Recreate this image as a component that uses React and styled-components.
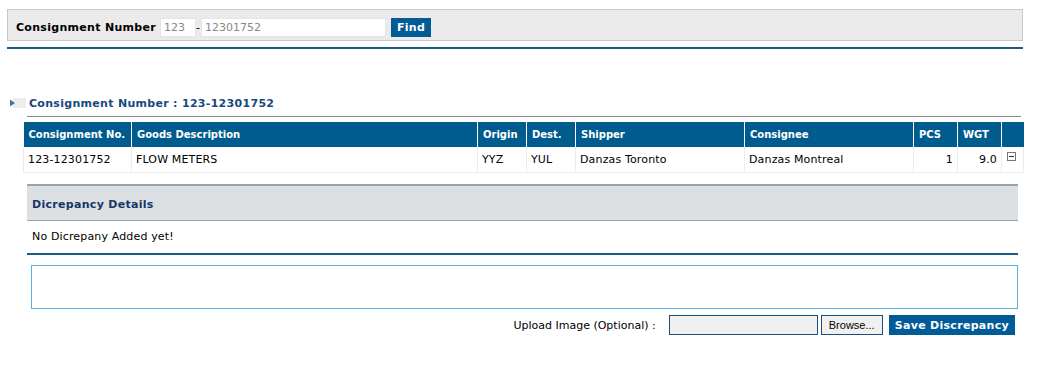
import React from 'react'
import styled, { createGlobalStyle } from 'styled-components'

const Global = createGlobalStyle`
  body {
    margin: 0;
    background: #fff;
    font-family: "DejaVu Sans", Verdana, sans-serif;
    font-size: 11px;
    color: #000;
  }
`

const Page = styled.div`
  width: 1016px;
  padding: 9px 0 0 7px;
`

const SearchBar = styled.div`
  display: flex;
  align-items: center;
  box-sizing: border-box;
  height: 32px;
  padding: 4px 8px 0;
  background: #ebebeb;
  border: 1px solid #c8c8c8;
`

const SearchLabel = styled.span`
  font-weight: bold;
  font-size: 11px;
  letter-spacing: 0.3px;
  margin-right: 4px;
`

const TextInput = styled.input`
  box-sizing: border-box;
  height: 19px;
  width: ${p => p.$w}px;
  padding: 0 3px;
  border: 1px solid #e4e4e4;
  background: #fff;
  font: 11px "DejaVu Sans", Verdana, sans-serif;
  color: #888;
  outline: none;
`

const Dash = styled.span`
  margin: 0 1px 0 0;
`

const BlueButton = styled.button`
  height: ${p => p.$h || 19}px;
  padding: 0 ${p => p.$px || 6}px;
  margin-left: ${p => p.$ml || 0}px;
  border: none;
  background: #005b96;
  color: #fff;
  font: bold 11px "DejaVu Sans", Verdana, sans-serif;
  letter-spacing: 0.3px;
  cursor: pointer;
`

const Rule = styled.div`
  height: 2px;
  background: ${p => p.$color || '#1c5b86'};
  margin: ${p => p.$m || '0'};
`

const Section = styled.div`
  margin-top: 47px;
`

const SectionHead = styled.div`
  display: flex;
  align-items: center;
  gap: 3px;
  padding-left: 2px;
  height: 14px;
`

const SectionTitle = styled.span`
  font-weight: bold;
  font-size: 11px;
  letter-spacing: 0.3px;
  color: #174a7c;
`

const TitleRule = styled.div`
  height: 1px;
  background: #8c8c8c;
  margin: 6px 2px 5px 20px;
`

const Grid = styled.table`
  border-collapse: collapse;
  margin-left: 16px;
  width: 1000px;
  table-layout: fixed;
`

const Th = styled.th`
  background: #005b8f;
  color: #fff;
  font-weight: bold;
  font-size: 10px;
  white-space: nowrap;
  overflow: hidden;
  text-align: left;
  height: 25px;
  padding: 0 5px;
  border-left: 1px solid #fff;
  &:first-child { border-left: none; }
`

const Td = styled.td`
  height: 25px;
  padding: 0 4px;
  font-size: 11px;
  letter-spacing: 0.15px;
  text-align: ${p => (p.$right ? 'right' : 'left')};
  vertical-align: ${p => (p.$top ? 'top' : 'middle')};
  border: 1px solid #ececec;
  border-top: none;
`

const Collapse = styled.span`
  display: inline-block;
  box-sizing: border-box;
  width: 9px;
  height: 9px;
  margin-top: 5px;
  margin-left: 1px;
  border: 1px solid #777;
  position: relative;
  &::after {
    content: '';
    position: absolute;
    left: 1px;
    right: 1px;
    top: 3px;
    height: 1px;
    background: #333;
  }
`

const Discrepancy = styled.div`
  margin: 11px 0 0 20px;
  width: 991px;
`

const DiscHead = styled.div`
  box-sizing: border-box;
  height: 37px;
  display: flex;
  align-items: center;
  padding: 3px 0 0 5px;
  background: #dde0e3;
  border-top: 2px solid #95a5b0;
  border-bottom: 1px solid #95a5b0;
  font-weight: bold;
  letter-spacing: 0.3px;
  color: #16356a;
`

const Empty = styled.div`
  padding: 9px 5px 0;
  height: 23px;
  letter-spacing: 0.15px;
`

const Note = styled.textarea`
  display: block;
  box-sizing: border-box;
  margin: 10px 0 0 4px;
  width: 987px;
  height: 44px;
  border: 1px solid #5ab0e0;
  resize: none;
  outline: none;
`

const UploadRow = styled.div`
  display: flex;
  justify-content: flex-end;
  align-items: center;
  margin-top: 6px;
  padding-right: 3px;
`

const UploadLabel = styled.span`
  margin-right: 13px;
`

const FileBox = styled.div`
  box-sizing: border-box;
  width: 149px;
  height: 20px;
  background: #f0f0f0;
  border: 1px solid #1c4f7c;
`

const Browse = styled.button`
  box-sizing: border-box;
  height: 20px;
  width: 62px;
  margin-left: 3px;
  background: #f0f0f0;
  border: 1px solid #1c4f7c;
  font: 11px "Liberation Sans", Arial, sans-serif;
  padding: 0;
`

const columns = [
  ['Consignment No.', 108],
  ['Goods Description', 346],
  ['Origin', 49],
  ['Dest.', 49],
  ['Shipper', 169],
  ['Consignee', 169],
  ['PCS', 44],
  ['WGT', 44],
  ['', 22],
]

const Arrow = () => (
  <svg width="17" height="12" viewBox="0 0 17 12">
    <rect x="4" y="1" width="13" height="10" fill="#ededed" />
    <path d="M1 2.5 L6 6 L1 9.5 Z" fill="#3f73a8" />
  </svg>
)

export default function App() {
  return (
    <Page>
      <Global />
      <SearchBar>
        <SearchLabel>Consignment Number</SearchLabel>
        <TextInput $w={36} defaultValue="123" />
        <Dash>-</Dash>
        <TextInput $w={185} defaultValue="12301752" />
        <BlueButton $ml={5} $px={6}>Find</BlueButton>
      </SearchBar>
      <Rule $m="6px 0 0" />

      <Section>
        <SectionHead>
          <Arrow />
          <SectionTitle>Consignment Number : 123-12301752</SectionTitle>
        </SectionHead>
        <TitleRule />
        <Grid>
          <colgroup>
            {columns.map(([, w], i) => (
              <col key={i} style={{ width: w }} />
            ))}
          </colgroup>
          <thead>
            <tr>
              {columns.map(([name], i) => (
                <Th key={i}>{name}</Th>
              ))}
            </tr>
          </thead>
          <tbody>
            <tr>
              <Td>123-12301752</Td>
              <Td>FLOW METERS</Td>
              <Td>YYZ</Td>
              <Td>YUL</Td>
              <Td>Danzas Toronto</Td>
              <Td>Danzas Montreal</Td>
              <Td $right>1</Td>
              <Td $right>9.0</Td>
              <Td $top>
                <Collapse />
              </Td>
            </tr>
          </tbody>
        </Grid>
      </Section>

      <Discrepancy>
        <DiscHead>Dicrepancy Details</DiscHead>
        <Empty>No Dicrepany Added yet!</Empty>
        <Rule />
        <Note autoFocus />
        <UploadRow>
          <UploadLabel>Upload Image (Optional) :</UploadLabel>
          <FileBox />
          <Browse>Browse...</Browse>
          <BlueButton $ml={6} $h={20} $px={6}>Save Discrepancy</BlueButton>
        </UploadRow>
      </Discrepancy>
    </Page>
  )
}
